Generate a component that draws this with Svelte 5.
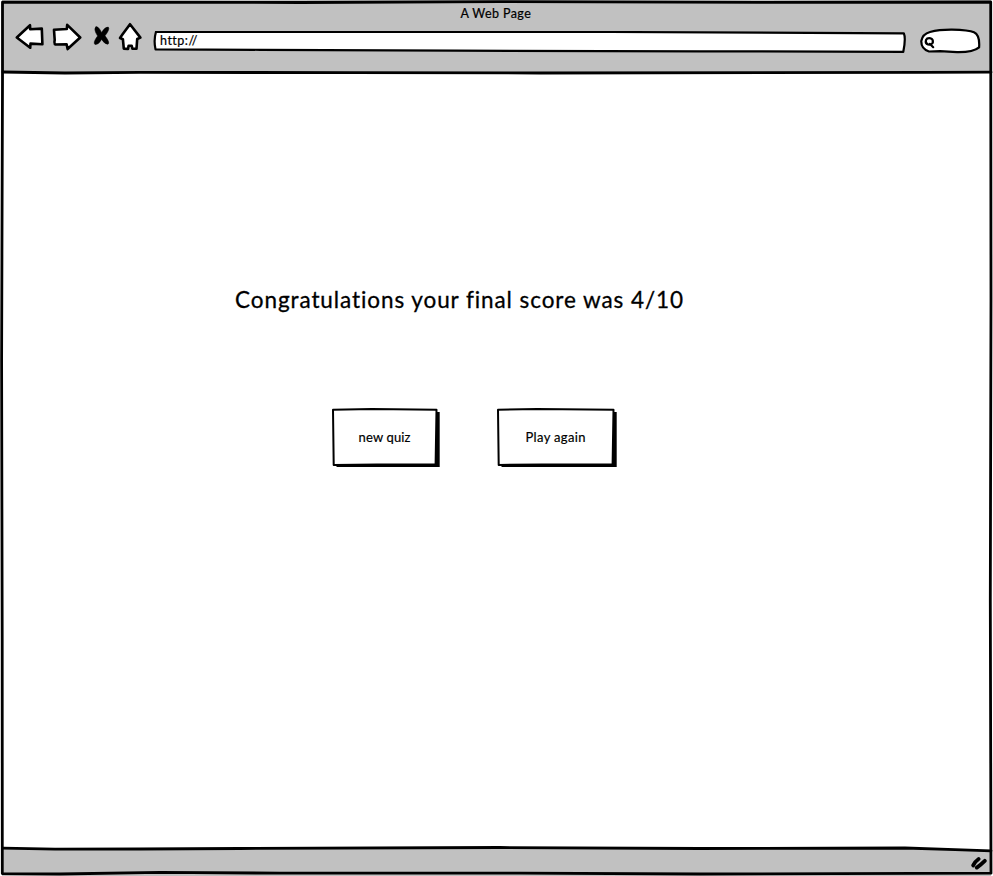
<script>
  const actions = [
    { label: 'new quiz', width: 108, textWidth: 52 },
    { label: 'Play again', width: 120, textWidth: 60 }
  ];
</script>

<div class="window">
  <header>
    <div class="title">A Web Page</div>
    <nav>
      <svg class="icon back" width="30" height="30" viewBox="15 22 30 30">
        <path d="M16.8 37.5 L30 25.2 L30.2 29.2 L41.8 28.6 L42.4 44.2 L30.5 43.6 L30.2 47.8 Z" />
      </svg>
      <svg class="icon forward" width="30" height="30" viewBox="52 22 30 30">
        <path d="M54 29.8 L66.8 29 L67.2 24.9 L80.2 37.5 L67.6 49 L66.6 44.2 L55.5 44.5 Q54 44 54.7 40 Z" />
      </svg>
      <svg class="stop" width="18" height="22" viewBox="93 25 18 22">
        <path d="M96 26.8 Q98.5 26 101.5 32.4 Q105 26.8 108.2 27 Q110.4 29 105 35.8 Q110.4 42.8 108 44.2 Q105 44.6 101.6 39.5 Q98.5 45 95 44.5 Q92.6 42.5 97.6 36 Q93 29 96 26.8 Z" />
      </svg>
      <svg class="icon home" width="25" height="30" viewBox="118 22 25 30">
        <path d="M130 24.2 L140.4 37.6 L137.2 39 L136.5 48.7 L132.4 48.7 L131.7 45.7 L128.6 45.7 L128 48.9 L123.8 48.7 L122.9 39.2 L120 38 L122.4 34.6 Z" />
      </svg>
      <div class="address">
        <svg width="753" height="22" viewBox="153 31 753 22">
          <path d="M156 31.8 Q300 31.4 430 32 L610 32 L903.8 33.3 Q906 38 903.3 51.8 L700 51.3 L455 50.7 L260 49.8 L155.5 49.3 Q153.5 40 156 31.8 Z" />
        </svg>
        <span>http://</span>
      </div>
      <svg class="search" width="62" height="28" viewBox="919 27 62 28">
        <path d="M930 32 Q939 29.5 952 29.6 Q969 30 974 32.3 Q980 35 979.1 47.4 Q973 52.5 957 52.2 L940 51.2 L929 51.5 Q921 49 921.3 41 Q922.5 34 930 32 Z" />
        <path class="lens" d="M926 40 Q927 37.8 930.5 38.3 Q933.4 39 932.8 42.7 Q931.5 45 928 44.5 Q925 43.5 926 40 Z M929.8 43.8 L933.2 47.2" />
      </svg>
    </nav>
  </header>

  <main>
    <h1><svg width="456" height="36"><text x="4" y="24" textLength="448">Congratulations your final score was 4/10</text></svg></h1>
    <div class="actions">
      {#each actions as action}
        <button style:width="{action.width}px">
          <svg class="edge" width={action.width} height="60">
            <path class="shadow" d="M5 4 H{action.width - 0.3} V59 H4.5 Z" />
            <path class="face" d="M1 1.7 L40 1 L{action.width - 3.5} 1.8 L{action.width - 4.4} 56.6 L45 56.4 L1.7 57 Z" />
          </svg>
          <svg class="label" width={action.textWidth + 4} height="22"><text x="2.5" y="15" textLength={action.textWidth}>{action.label}</text></svg>
        </button>
      {/each}
    </div>
  </main>

  <footer>
    <svg width="17" height="15" viewBox="970 855 17 15">
      <path d="M973.2 865.4 Q975 861.5 978.6 859 M976.8 867.6 Q980.5 865 984.8 860.8" />
    </svg>
  </footer>

  <svg class="frame" width="993" height="876" viewBox="0 0 993 876">
    <path class="paper" d="M4 848.3 L300 848.5 L500 847.5 L905 848 L990 850.8 L990 840 H4 Z" />
    <path d="M2.5 2.2 L300 2.5 L500 1.7 L760 2.3 L990.7 2 L991 300 L990.3 600 L991 873.2 L700 874 L520 873.2 L280 873.2 L160 872.3 L60 874 L2.3 873.6 L2.2 640 L1.6 360 L2.5 80 Z" />
    <path d="M3 72 L65 73 L140 72.3 L350 72.7 L540 73 L925 72.3 L991 72.2" />
    <path d="M3 848.2 L55 849.2 L140 849 L240 848.5 L500 847.5 L700 848.5 L905 848 L955 849.6 L991 850.8" />
  </svg>
</div>

<style>
  :global(body) { margin: 0; background: #fff; }
  .window {
    position: relative;
    width: 993px;
    height: 876px;
    display: flex;
    flex-direction: column;
    background: #fff;
    color: #000;
    font-family: Lato, "Open Sans", sans-serif;
    font-variant-ligatures: none;
    overflow: hidden;
  }
  svg { display: block; flex: none; }
  path { fill: none; stroke: #000; stroke-width: 2.6; stroke-linejoin: round; stroke-linecap: round; }
  text { fill: #000; stroke: #000; stroke-width: 0.2px; }
  header { height: 72px; margin: 0 2px; background: #c1c1c1; }
  .title, .address span { -webkit-text-stroke: 0.2px #000; }
  .title {
    height: 22px;
    padding-top: 5px;
    box-sizing: border-box;
    padding-left: 458.5px;
    font-size: 12.5px;
    line-height: 17px;
    letter-spacing: 0.4px;
  }
  nav { display: flex; align-items: flex-start; padding-left: 13px; }
  .icon path { fill: #fff; }
  .forward { margin-left: 7px; }
  .stop { margin: 3px 7px 0 11px; }
  .stop path { fill: #000; stroke-width: 0.5; }
  .address { display: grid; margin: 9px 13px 0 10px; }
  .address > * { grid-area: 1 / 1; }
  .address path { fill: #fff; stroke-width: 2.2; }
  .address span { padding-left: 7px; font-size: 12.5px; line-height: 20px; letter-spacing: 0.5px; }
  .search { margin-top: 5px; }
  .search path { fill: #fff; stroke-width: 2.2; }
  .search .lens { stroke-width: 2.2; }
  main { flex: 1; }
  h1 {
    margin: 212px 0 0 231px;
    font-size: 22.5px;
    font-weight: 400;
  }
  h1 text { stroke-width: 0.3px; }
  .actions { display: flex; gap: 57px; margin: 88px 0 0 332px; }
  button {
    display: grid;
    place-items: center;
    height: 60px;
    padding: 0;
    border: 0;
    background: none;
    font: 13px Lato, "Open Sans", sans-serif;
  }
  button > * { grid-area: 1 / 1; }
  .face { fill: #fff; stroke-width: 2; }
  .shadow { fill: #000; stroke: none; }
  .label { margin: 0 4px 0 0; }
  footer {
    display: flex;
    justify-content: flex-end;
    height: 21px;
    margin: 0 2px;
    padding: 7px 4px 0 0;
    background: #c1c1c1;
  }
  footer path { stroke-width: 3.8; }
  .frame { position: absolute; inset: 0; pointer-events: none; }
  .frame path { stroke-width: 2.8; }
  .frame .paper { fill: #fff; stroke: none; }
</style>
